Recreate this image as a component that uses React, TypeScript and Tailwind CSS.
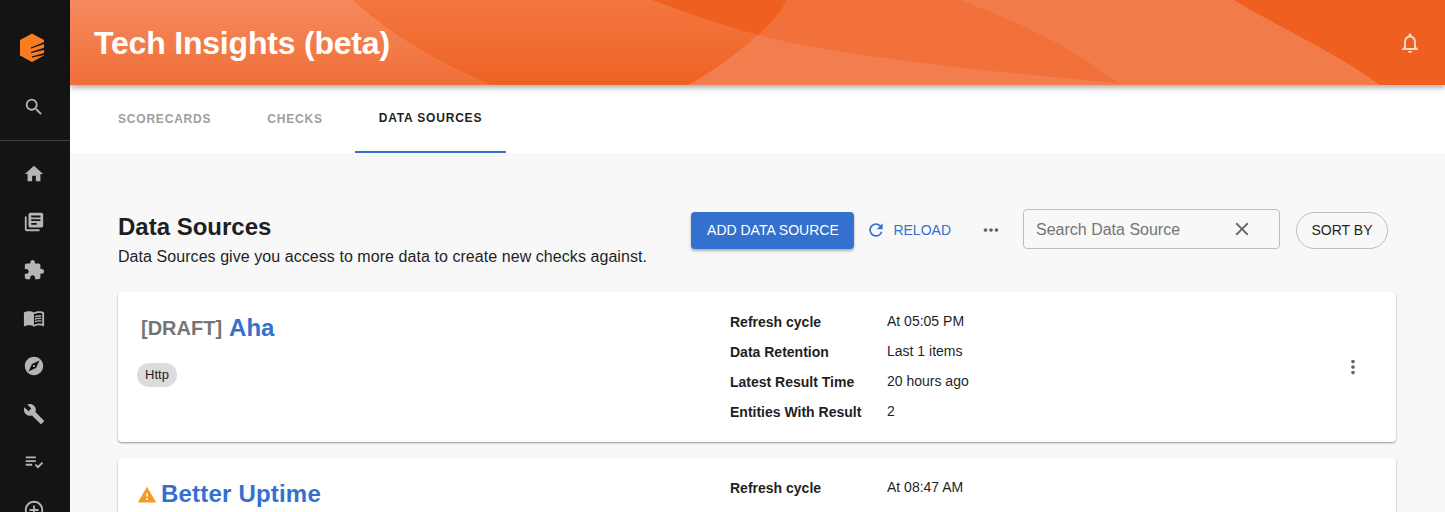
import {
  MdAddCircleOutline,
  MdBuild,
  MdClose,
  MdExplore,
  MdExtension,
  MdHome,
  MdLibraryBooks,
  MdMenuBook,
  MdMoreHoriz,
  MdMoreVert,
  MdNotificationsNone,
  MdPlaylistAddCheck,
  MdRefresh,
  MdSearch,
  MdWarning,
} from "react-icons/md";

const navIcons = [MdHome, MdLibraryBooks, MdExtension, MdMenuBook, MdExplore, MdBuild, MdPlaylistAddCheck, MdAddCircleOutline];

function Logo() {
  return (
    <svg width="26" height="30" viewBox="0 0 26 30" aria-hidden>
      <path d="M13 0.5 L25 7 V22.5 L13 29 L1 22.5 V7 Z" fill="#f97b22" />
      <path d="M12 15 L25.5 9.3 L25.5 10.5 Z M12 19.6 L25.5 15 L25.5 16.4 Z M13 24 L25.5 20.3 L25.5 21.6 Z" stroke="#141414" strokeWidth="0.8" fill="#141414" />
    </svg>
  );
}

function Sidebar() {
  return (
    <aside className="flex h-full w-[70px] shrink-0 flex-col bg-[#141414] text-[#b5b5b5]">
      <div className="flex h-[94px] shrink-0 items-center justify-center pr-1.5 pt-0.5">
        <Logo />
      </div>
      <div className="flex h-[47px] shrink-0 items-start justify-center border-b border-[#3f3f3f] pr-0.5 pt-[2px]">
        <MdSearch size={22} />
      </div>
      <nav className="flex flex-col items-center pr-0.5 pt-[9px]">
        {navIcons.map((Icon, i) => (
          <div key={i} className="flex h-12 w-full shrink-0 items-center justify-center">
            <Icon size={22} />
          </div>
        ))}
      </nav>
    </aside>
  );
}

function Header() {
  return (
    <header className="relative z-10 flex h-[85px] shrink-0 items-center justify-between overflow-hidden bg-[#ee5f20] pl-6 pr-6 shadow-[0_3px_5px_rgba(0,0,0,0.3)]">
      {/* Wave pattern behind the title, drawn in page coordinates */}
      <svg className="absolute inset-0 h-full w-full" viewBox="70 0 1375 85" preserveAspectRatio="none" aria-hidden>
        <defs>
          <linearGradient id="leftWave" x1="0" y1="0" x2="0" y2="1">
            <stop offset="0" stopColor="#f58a5e" />
            <stop offset="1" stopColor="#ef6f38" />
          </linearGradient>
          <linearGradient id="midWave" x1="0" y1="0" x2="0" y2="1">
            <stop offset="0" stopColor="#f3773f" />
            <stop offset="1" stopColor="#ee6225" />
          </linearGradient>
        </defs>
        <path d="M70 0 L353 0 C380 25 430 60 493 85 L70 85 Z" fill="url(#leftWave)" />
        <path d="M353 0 L652 0 C685 12 720 25 758 35 C735 55 712 72 688 85 L493 85 C430 60 380 25 353 0 Z" fill="url(#midWave)" />
        <path d="M787 0 L958 0 C1020 22 1075 50 1118 83 C1000 72 850 58 758 35 C772 23 780 12 787 0 Z" fill="#f2713a" />
        <path d="M758 35 C850 58 1000 72 1118 83 L1120 85 L688 85 C712 72 735 55 758 35 Z" fill="#f27e4f" />
        <path d="M958 0 L1234 0 C1280 28 1335 52 1380 85 L1120 85 L1118 83 C1075 50 1020 22 958 0 Z" fill="#f27b4a" />
      </svg>
      <h1 className="relative text-[32px] font-bold tracking-[-0.2px] text-white">Tech Insights (beta)</h1>
      <MdNotificationsNone size={24} className="relative -mr-px text-[#f5dbce]" />
    </header>
  );
}

function Tabs() {
  const tabs = ["SCORECARDS", "CHECKS", "DATA SOURCES"];
  return (
    <div className="flex h-[68px] shrink-0 gap-2 bg-white pl-6">
      {tabs.map((t, i) => (
        <div
          key={t}
          className={
            i === 2
              ? "flex h-full items-center border-b-2 border-[#3470ce] px-6 text-xs font-bold tracking-[0.8px] text-[#1f1f1f]"
              : "flex h-full items-center px-6 text-xs font-bold tracking-[0.8px] text-[#9e9e9e]"
          }
        >
          {t}
        </div>
      ))}
    </div>
  );
}

function Toolbar() {
  return (
    <div className="flex items-center">
      <button className="mt-[2px] flex h-[37px] w-[163px] items-center justify-center rounded bg-[#3470ce] text-sm text-white shadow-[0_2px_3px_rgba(0,0,0,0.3)]">
        ADD DATA SOURCE
      </button>
      <button className="ml-3 mt-[2px] flex items-center text-sm text-[#3470ce]">
        <MdRefresh size={20} />
        <span className="ml-[7px]">RELOAD</span>
      </button>
      <MdMoreHoriz size={22} className="ml-[29px] mt-[2px] text-[#666]" />
      <div className="ml-[21px] flex h-10 w-[257px] items-center justify-between rounded border border-[#bdbdbd] pl-[12px] pr-[26px]">
        <span className="pt-0.5 text-base text-[#757575]">Search Data Source</span>
        <MdClose size={22} className="text-[#666]" />
      </div>
      <button className="ml-4 mt-[2px] h-[37px] w-[92px] rounded-full border border-[#bdbdbd] text-sm text-[#1f1f1f]">SORT BY</button>
    </div>
  );
}

function Details({ rows }: { rows: [string, string][] }) {
  return (
    <div className="flex flex-col">
      {rows.map(([label, value]) => (
        <div key={label} className="flex h-[30px] items-center text-sm text-[#1f1f1f]">
          <span className="w-[157px] font-bold">{label}</span>
          <span className="pb-0.5">{value}</span>
        </div>
      ))}
    </div>
  );
}

function Card({ title, rows, draft, warn }: { title: string; rows: [string, string][]; draft?: boolean; warn?: boolean }) {
  return (
    <div className="flex h-[150px] shrink-0 rounded bg-white pt-[15px] shadow-[0_1px_2px_rgba(0,0,0,0.4)]">
      <div className="w-[612px] shrink-0 pl-[19px]">
        <div className="flex h-[42px] items-center">
          {warn && <MdWarning size={20} className="mr-1 mt-0.5 text-[#f79a25]" />}
          {draft && <span className="ml-1 mr-[7px] text-xl font-bold text-[#757575]">[DRAFT]</span>}
          <span className={warn ? "text-2xl font-bold tracking-[0.2px] text-[#3470ce]" : "text-2xl font-bold text-[#3470ce]"}>{title}</span>
        </div>
        {draft && (
          <span className="mt-[14px] flex h-6 w-10 items-center justify-center rounded-full bg-[#dcdcdc] text-[13px] text-[#1f1f1f]">Http</span>
        )}
      </div>
      <Details rows={rows} />
      <div className="flex flex-1 items-start justify-end pr-8 pt-[49px]">
        <MdMoreVert size={22} className="text-[#666]" />
      </div>
    </div>
  );
}

export default function App() {
  return (
    <div className="flex h-screen overflow-hidden bg-[#f8f8f8] font-['Liberation_Sans',sans-serif]">
      <Sidebar />
      <main className="flex min-w-0 flex-1 flex-col">
        <Header />
        <Tabs />
        <div className="flex flex-col pl-12 pr-[49px]">
          <div className="flex items-start justify-between pt-14">
            <div className="pt-[2px]">
              <h2 className="text-2xl font-bold leading-8 text-[#1f1f1f]">Data Sources</h2>
              <p className="mt-0.5 text-base leading-6 tracking-[0.06px] text-[#1f1f1f]">Data Sources give you access to more data to create new checks against.</p>
            </div>
            <div className="pr-2">
              <Toolbar />
            </div>
          </div>
          <div className="mt-[23px] flex flex-col gap-4">
            <Card
              draft
              title="Aha"
              rows={[
                ["Refresh cycle", "At 05:05 PM"],
                ["Data Retention", "Last 1 items"],
                ["Latest Result Time", "20 hours ago"],
                ["Entities With Result", "2"],
              ]}
            />
            <Card warn title="Better Uptime" rows={[["Refresh cycle", "At 08:47 AM"]]} />
          </div>
        </div>
      </main>
    </div>
  );
}
